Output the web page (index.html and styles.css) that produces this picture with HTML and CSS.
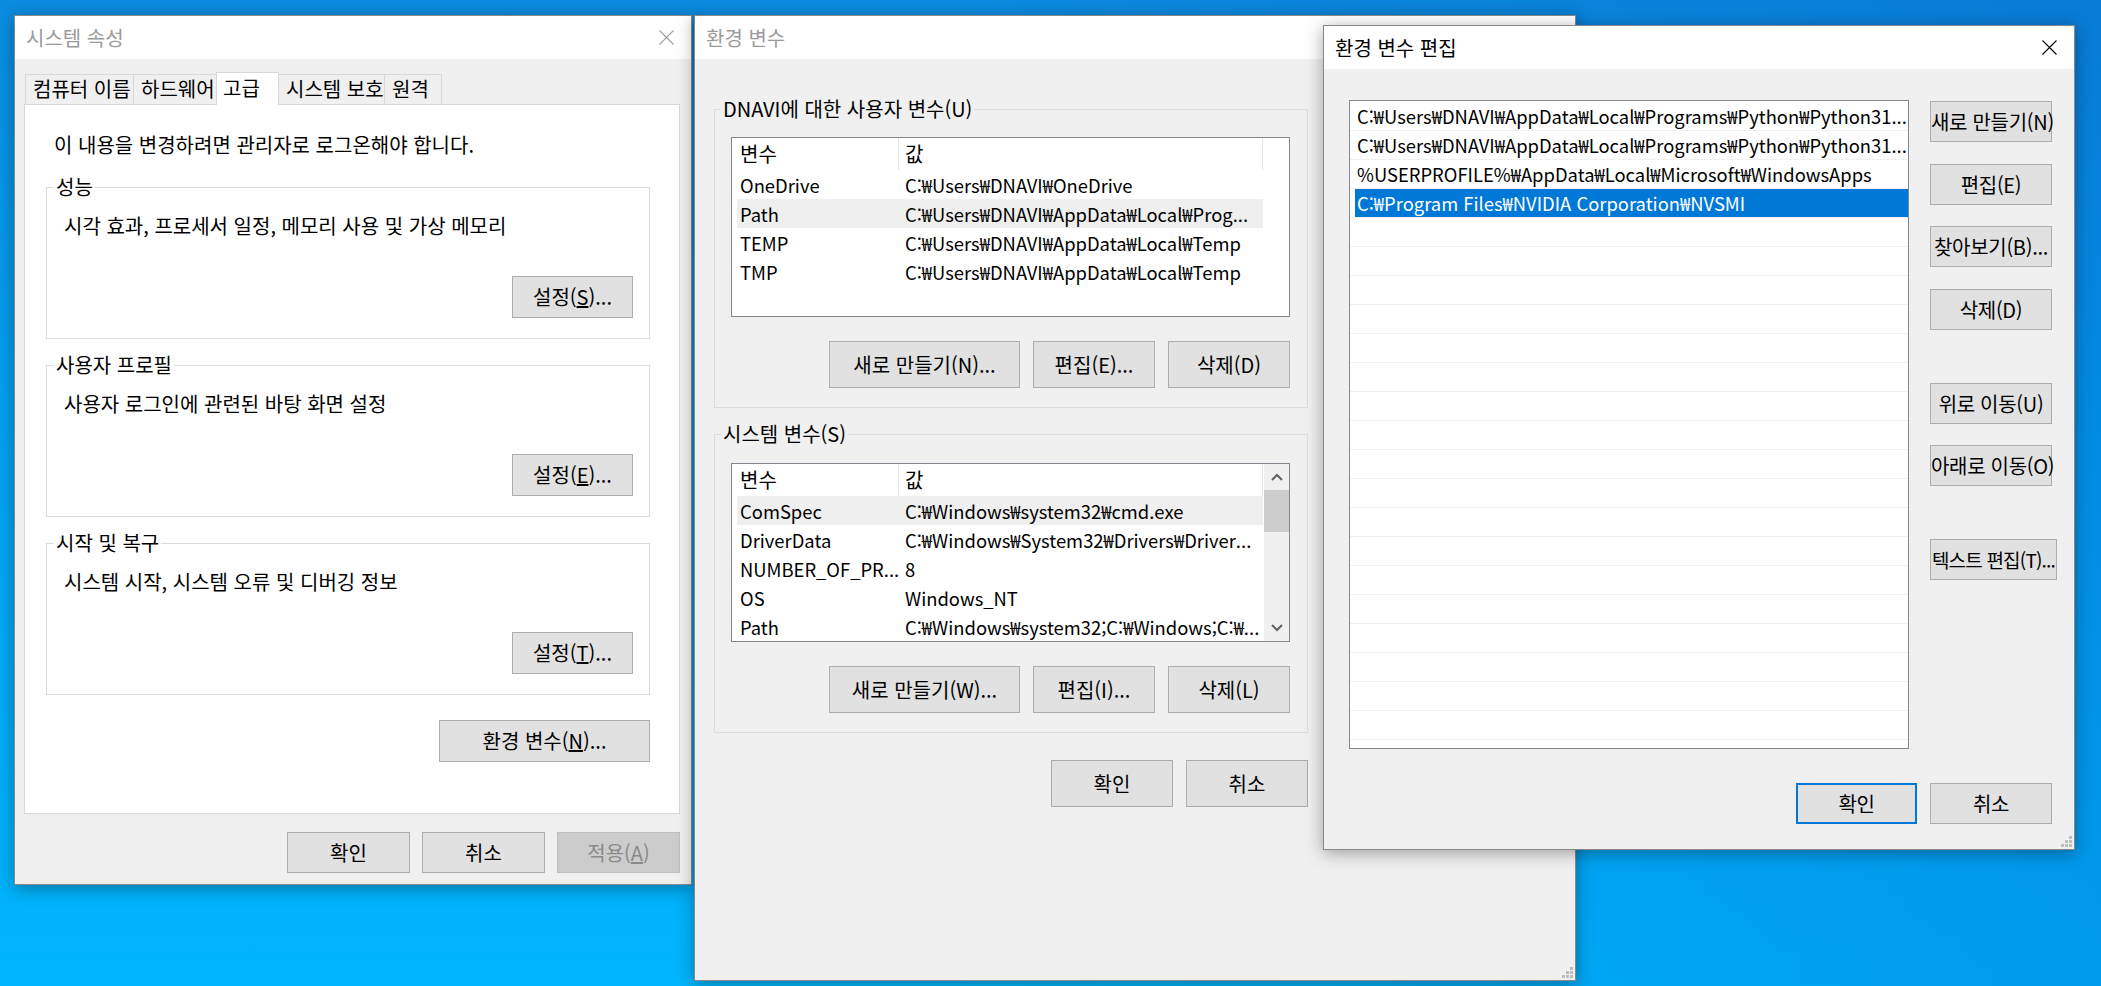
FILE: index.html
```
<!DOCTYPE html>
<html lang="ko">
<head>
<meta charset="UTF-8">
<title>환경 변수</title>
<link rel="stylesheet" href="styles.css">
</head>
<body>

<!-- 시스템 속성 -->
<div class="window sysprop">
	<div class="titlebar inactive">
		<span class="title">시스템 속성</span>
		<svg class="close" width="15" height="15" viewBox="0 0 15 15"><path d="M0.5 0.5L14.5 14.5M14.5 0.5L0.5 14.5" stroke="#a0a0a0" stroke-width="1.1"/></svg>
	</div>
	<div class="body">
		<div class="tabs">
			<div class="tab t1">컴퓨터 이름</div>
			<div class="tab t2">하드웨어</div>
			<div class="tab t3 active">고급</div>
			<div class="tab t4">시스템 보호</div>
			<div class="tab t5">원격</div>
		</div>
		<div class="tabpanel">
			<p class="notice">이 내용을 변경하려면 관리자로 로그온해야 합니다.</p>
			<fieldset class="group">
				<legend>성능</legend>
				<p class="desc">시각 효과, 프로세서 일정, 메모리 사용 및 가상 메모리</p>
				<div class="group-actions"><button class="btn btn-set">설정(<u>S</u>)...</button></div>
			</fieldset>
			<fieldset class="group">
				<legend>사용자 프로필</legend>
				<p class="desc">사용자 로그인에 관련된 바탕 화면 설정</p>
				<div class="group-actions"><button class="btn btn-set">설정(<u>E</u>)...</button></div>
			</fieldset>
			<fieldset class="group">
				<legend>시작 및 복구</legend>
				<p class="desc">시스템 시작, 시스템 오류 및 디버깅 정보</p>
				<div class="group-actions"><button class="btn btn-set">설정(<u>T</u>)...</button></div>
			</fieldset>
			<div class="panel-actions"><button class="btn btn-env">환경 변수(<u>N</u>)...</button></div>
		</div>
		<div class="dialog-actions">
			<button class="btn btn-main">확인</button>
			<button class="btn btn-main">취소</button>
			<button class="btn btn-main" disabled>적용(<u>A</u>)</button>
		</div>
	</div>
</div>

<!-- 환경 변수 -->
<div class="window envvars">
	<div class="titlebar inactive">
		<span class="title">환경 변수</span>
	</div>
	<div class="body">
		<fieldset class="group">
			<legend>DNAVI에 대한 사용자 변수(U)</legend>
			<div class="listbox user-list">
				<div class="listview">
					<div class="lv-head"><span class="hcell c1">변수</span><span class="hcell c2">값</span></div>
					<div class="lv-row"><span class="c1">OneDrive</span><span class="c2">C:₩Users₩DNAVI₩OneDrive</span></div>
					<div class="lv-row hl"><span class="c1">Path</span><span class="c2">C:₩Users₩DNAVI₩AppData₩Local₩Prog...</span></div>
					<div class="lv-row"><span class="c1">TEMP</span><span class="c2">C:₩Users₩DNAVI₩AppData₩Local₩Temp</span></div>
					<div class="lv-row"><span class="c1">TMP</span><span class="c2">C:₩Users₩DNAVI₩AppData₩Local₩Temp</span></div>
				</div>
			</div>
			<div class="list-actions">
				<button class="btn btn-tall btn-new">새로 만들기(N)...</button>
				<button class="btn btn-tall btn-sm">편집(E)...</button>
				<button class="btn btn-tall btn-sm">삭제(D)</button>
			</div>
		</fieldset>
		<fieldset class="group">
			<legend>시스템 변수(S)</legend>
			<div class="listbox sys-list">
				<div class="listview">
					<div class="lv-head"><span class="hcell c1">변수</span><span class="hcell c2">값</span></div>
					<div class="lv-row hl"><span class="c1">ComSpec</span><span class="c2">C:₩Windows₩system32₩cmd.exe</span></div>
					<div class="lv-row"><span class="c1">DriverData</span><span class="c2">C:₩Windows₩System32₩Drivers₩Driver...</span></div>
					<div class="lv-row"><span class="c1">NUMBER_OF_PR...</span><span class="c2">8</span></div>
					<div class="lv-row"><span class="c1">OS</span><span class="c2">Windows_NT</span></div>
					<div class="lv-row"><span class="c1">Path</span><span class="c2">C:₩Windows₩system32;C:₩Windows;C:₩...</span></div>
				</div>
				<div class="scrollbar">
					<div class="sb-btn"><svg width="12" height="8" viewBox="0 0 12 8"><path d="M1 7L6 2L11 7" fill="none" stroke="#606060" stroke-width="2"/></svg></div>
					<div class="sb-track"><div class="sb-thumb"></div></div>
					<div class="sb-btn"><svg width="12" height="8" viewBox="0 0 12 8"><path d="M1 1L6 6L11 1" fill="none" stroke="#606060" stroke-width="2"/></svg></div>
				</div>
			</div>
			<div class="list-actions">
				<button class="btn btn-tall btn-new">새로 만들기(W)...</button>
				<button class="btn btn-tall btn-sm">편집(I)...</button>
				<button class="btn btn-tall btn-sm">삭제(L)</button>
			</div>
		</fieldset>
		<div class="env-actions">
			<button class="btn btn-tall btn-sm">확인</button>
			<button class="btn btn-tall btn-sm">취소</button>
		</div>
	</div>
	<svg class="grip" width="11" height="11" viewBox="0 0 11 11"><g fill="#bdbdbd"><rect x="8" y="0" width="3" height="3"/><rect x="4" y="4" width="3" height="3"/><rect x="8" y="4" width="3" height="3"/><rect x="0" y="8" width="3" height="3"/><rect x="4" y="8" width="3" height="3"/><rect x="8" y="8" width="3" height="3"/></g></svg>
</div>

<!-- 환경 변수 편집 -->
<div class="window pathedit">
	<div class="titlebar">
		<span class="title">환경 변수 편집</span>
		<svg class="close" width="15" height="15" viewBox="0 0 15 15"><path d="M0.5 0.5L14.5 14.5M14.5 0.5L0.5 14.5" stroke="#000" stroke-width="1.1"/></svg>
	</div>
	<div class="body">
		<div class="edit-main">
			<div class="listbox path-list">
				<div class="path-row">C:₩Users₩DNAVI₩AppData₩Local₩Programs₩Python₩Python31...</div>
				<div class="path-row">C:₩Users₩DNAVI₩AppData₩Local₩Programs₩Python₩Python31...</div>
				<div class="path-row">%USERPROFILE%₩AppData₩Local₩Microsoft₩WindowsApps</div>
				<div class="path-row selected">C:₩Program Files₩NVIDIA Corporation₩NVSMI</div>
				<div class="path-row"></div><div class="path-row"></div><div class="path-row"></div>
				<div class="path-row"></div><div class="path-row"></div><div class="path-row"></div>
				<div class="path-row"></div><div class="path-row"></div><div class="path-row"></div>
				<div class="path-row"></div><div class="path-row"></div><div class="path-row"></div>
				<div class="path-row"></div><div class="path-row"></div><div class="path-row"></div>
				<div class="path-row"></div><div class="path-row"></div><div class="path-row"></div>
				<div class="path-row"></div>
			</div>
			<div class="side-buttons">
				<button class="btn side b-new">새로 만들기(N)</button>
				<button class="btn side b-edit">편집(E)</button>
				<button class="btn side b-browse">찾아보기(B)...</button>
				<button class="btn side b-del">삭제(D)</button>
				<button class="btn side b-up">위로 이동(U)</button>
				<button class="btn side b-down">아래로 이동(O)</button>
				<button class="btn side b-text">텍스트 편집(T)...</button>
			</div>
		</div>
		<div class="edit-actions">
			<button class="btn side default">확인</button>
			<button class="btn side">취소</button>
		</div>
	</div>
	<svg class="grip" width="11" height="11" viewBox="0 0 11 11"><g fill="#bdbdbd"><rect x="8" y="0" width="3" height="3"/><rect x="4" y="4" width="3" height="3"/><rect x="8" y="4" width="3" height="3"/><rect x="0" y="8" width="3" height="3"/><rect x="4" y="8" width="3" height="3"/><rect x="8" y="8" width="3" height="3"/></g></svg>
</div>

</body>
</html>
```

FILE: styles.css
```
*{
	box-sizing: border-box;
}

html, body{
	margin: 0;
	width: 2101px;
	height: 986px;
	overflow: hidden;
}

body{
	font: 20px/24px "Noto Sans CJK KR", sans-serif;
	color: #000;
	background:
		linear-gradient(to right, rgba(0, 50, 170, 0) 45%, rgba(0, 50, 170, .2) 100%),
		linear-gradient(to bottom, #0b8ce0 0%, #03a2f1 45%, #00b5fc 100%);
}

p{
	margin: 0;
}

/* 창 공통 */
.window{
	position: absolute;
	display: flex;
	flex-direction: column;
	background: #f0f0f0;
	border: 1px solid #888;
	box-shadow: 0 3px 16px rgba(0, 0, 0, .35);
}

.titlebar{
	flex: none;
	height: 43px;
	background: #fff;
	display: flex;
	align-items: center;
	justify-content: space-between;
	padding: 0 17px 0 11px;
}

.titlebar .title{
	white-space: nowrap;
}

.titlebar.inactive .title{
	color: #9a9a9a;
}

.btn{
	font: inherit;
	line-height: 24px;
	color: #000;
	background: #e1e1e1;
	border: 1px solid #adadad;
	padding: 0;
	white-space: nowrap;
	height: 42px;
}

.btn[disabled]{
	background: #cccccc;
	border-color: #bfbfbf;
	color: #8a8a8a;
}

.grip{
	align-self: flex-end;
	margin: auto 2px 2px 0;
}

/* 시스템 속성 */
.sysprop{
	left: 14px;
	top: 15px;
	width: 678px;
	height: 870px;
}

.sysprop .body{
	padding: 13px 11px 0 9px;
}

.tabs{
	display: flex;
	align-items: flex-end;
	height: 32px;
	padding-left: 1px;
}

.tab{
	height: 30px;
	line-height: 28px;
	padding-left: 7px;
	background: #f0f0f0;
	border: 1px solid #d9d9d9;
	border-bottom: none;
	margin-right: -1px;
	white-space: nowrap;
}

.tab.t1{ width: 109px; }
.tab.t2{ width: 84px; }
.tab.t3{ width: 63px; }
.tab.t4{ width: 107px; }
.tab.t5{ width: 58px; }

.tab.active{
	position: relative;
	z-index: 1;
	height: 33px;
	margin-bottom: -1px;
	padding-left: 6px;
	line-height: 30px;
	background: #fff;
}

.tabpanel{
	width: 656px;
	height: 710px;
	background: #fff;
	border: 1px solid #d9d9d9;
	padding: 0 29px 0 21px;
}

.notice{
	margin: 28px 0 0 8px;
}

.group{
	margin: 0;
	min-width: 0;
	border: 1px solid #dcdcdc;
}

.group legend{
	padding: 0 2px;
	line-height: 24px;
}

.sysprop .group{
	margin-top: 14px;
	padding: 0 16px 20px 7px;
}

.sysprop .notice + .group{
	margin-top: 18px;
}

.desc{
	margin: 15px 0 0 10px;
}

.group-actions{
	display: flex;
	justify-content: flex-end;
	margin-top: 38px;
}

.btn-set{
	width: 121px;
}

.panel-actions{
	display: flex;
	justify-content: flex-end;
	margin-top: 25px;
}

.btn-env{
	width: 211px;
}

.dialog-actions{
	display: flex;
	justify-content: flex-end;
	gap: 12px;
	margin-top: 18px;
}

.btn-main{
	width: 123px;
	height: 41px;
}

/* 환경 변수 */
.envvars{
	left: 694px;
	top: 15px;
	width: 882px;
	height: 966px;
}

.envvars .body{
	padding: 38px 0 0 19px;
}

.envvars .group{
	width: 594px;
	padding: 0 17px 19px 6px;
}

.envvars .group + .group{
	margin-top: 14px;
}

.listbox{
	display: flex;
	background: #fff;
	border: 1px solid #828790;
	overflow: hidden;
}

.user-list{
	margin: 16px 0 0 10px;
	height: 180px;
}

.sys-list{
	margin: 17px 0 0 10px;
	height: 179px;
}

.listview{
	flex: 1;
	padding-left: 5px;
	white-space: nowrap;
}

.lv-head, .lv-row{
	display: flex;
}

.lv-head{
	height: 32px;
	line-height: 32px;
}

/* 목록 안의 경로 글자는 영문이 많아서 조금 작게 */
.lv-row{
	width: 526px;
	height: 29px;
	line-height: 30px;
	font-size: 18.4px;
}

.lv-row.hl{
	background: #efefef;
}

.c1, .c2{
	overflow: hidden;
}

.c1{
	width: 162px;
	padding-left: 3px;
}

.c2{
	width: 364px;
	padding-left: 6px;
}

.hcell{
	border-right: 1px solid #e5e5e5;
}

.scrollbar{
	width: 25px;
	display: flex;
	flex-direction: column;
	background: #f0f0f0;
}

.sb-btn{
	height: 26px;
	display: flex;
	align-items: center;
	justify-content: center;
}

.sb-track{
	flex: 1;
}

.sb-thumb{
	height: 42px;
	background: #cdcdcd;
}

.list-actions{
	display: flex;
	justify-content: flex-end;
	gap: 13px;
	margin-top: 24px;
}

.btn-tall{
	height: 47px;
}

.btn-new{
	width: 191px;
}

.btn-sm{
	width: 122px;
}

.env-actions{
	display: flex;
	justify-content: flex-end;
	gap: 13px;
	width: 594px;
	margin-top: 27px;
}

/* 환경 변수 편집 */
.pathedit{
	left: 1323px;
	top: 25px;
	width: 752px;
	height: 825px;
}

.pathedit .body{
	padding: 31px 0 0 25px;
}

.edit-main{
	display: flex;
	align-items: flex-start;
}

.path-list{
	flex-direction: column;
	width: 560px;
	height: 649px;
	padding-top: 1px;
}

.path-row{
	flex: none;
	height: 29px;
	line-height: 29px;
	padding-left: 7px;
	font-size: 18.4px;
	border-bottom: 1px solid #f0f0f0;
	white-space: nowrap;
	overflow: hidden;
}

.path-row.selected{
	background: linear-gradient(to right, #fff 5px, #0078d7 5px);
	color: #fff;
}

.side-buttons{
	display: flex;
	flex-direction: column;
	align-items: flex-start;
	margin-left: 21px;
	padding-top: 1px;
}

.btn.side{
	width: 122px;
	height: 41px;
	letter-spacing: -0.3px;
}

.b-edit{ margin-top: 22px; }
.b-browse{ margin-top: 21px; }
.b-del{ margin-top: 22px; }
.b-up{ margin-top: 53px; }
.b-down{ margin-top: 21px; }
.b-text{ margin-top: 53px; }

.btn.b-text{
	width: 127px;
	font-size: 19px;
	letter-spacing: -0.8px;
}

.edit-actions{
	display: flex;
	justify-content: flex-end;
	gap: 13px;
	width: 703px;
	margin-top: 34px;
}

.btn.default{
	width: 121px;
	border: 2px solid #0078d7;
}
```
